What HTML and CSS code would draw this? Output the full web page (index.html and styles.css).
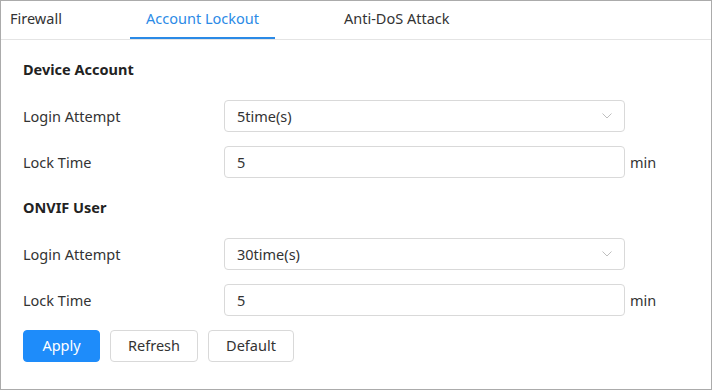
FILE: index.html
```html
<!DOCTYPE html>
<html>
<head>
<meta charset="utf-8">
<link rel="stylesheet" href="styles.css">
</head>
<body>
<div class="frame">
  <div class="tabs">
    <div class="tab first">Firewall</div>
    <div class="tab active">Account Lockout</div>
    <div class="tab last">Anti-DoS Attack</div>
  </div>
  <div class="content">
    <div class="section-title">Device Account</div>
    <div class="row">
      <div class="label">Login Attempt</div>
      <div class="box select"><span>5time(s)</span>
        <svg class="chev" width="10" height="6" viewBox="0 0 10 6"><path d="M0.5 0.5 L5 5 L9.5 0.5" fill="none" stroke="#bfbfbf" stroke-width="1"/></svg>
      </div>
    </div>
    <div class="row">
      <div class="label">Lock Time</div>
      <div class="box"><span>5</span></div>
      <div class="unit">min</div>
    </div>
    <div class="section-title">ONVIF User</div>
    <div class="row">
      <div class="label">Login Attempt</div>
      <div class="box select"><span>30time(s)</span>
        <svg class="chev" width="10" height="6" viewBox="0 0 10 6"><path d="M0.5 0.5 L5 5 L9.5 0.5" fill="none" stroke="#bfbfbf" stroke-width="1"/></svg>
      </div>
    </div>
    <div class="row">
      <div class="label">Lock Time</div>
      <div class="box"><span>5</span></div>
      <div class="unit">min</div>
    </div>
    <div class="buttons">
      <div class="btn primary">Apply</div>
      <div class="btn refresh">Refresh</div>
      <div class="btn default">Default</div>
    </div>
  </div>
</div>
</body>
</html>
```
FILE: styles.css
```css
* { box-sizing: border-box; }
html, body { margin: 0; padding: 0; }
body {
  font-family: "Noto Sans", "Open Sans", sans-serif;
  font-size: 14.5px;
  color: #333;
  background: #fff;
}
.frame {
  width: 712px;
  height: 390px;
  border: 1px solid #ababab;
  overflow: hidden;
}
.tabs {
  display: flex;
  height: 39px;
  border-bottom: 1px solid #e4e4e4;
  padding-left: 9px;
}
.tab {
  line-height: 35px;
  color: #333;
  flex: none;
}
.tab.first { width: 67px; }
.tab.active {
  margin-left: 53px;
  color: #2b8ae6;
  border-bottom: 2px solid #2b8ae6;
  width: 145px;
  text-align: center;
}
.tab.last { margin-left: 69px; }
.content {
  padding: 20px 0 0 22px;
}
.section-title {
  font-weight: bold;
  line-height: 19px;
  height: 20px;
  margin-bottom: 20px;
  color: #222;
}
.row {
  display: flex;
  align-items: center;
  height: 32px;
  margin-bottom: 14px;
}
.row + .section-title { margin-top: 20px; }
.label {
  width: 201px;
  flex: none;
}
.box {
  width: 401px;
  height: 32px;
  border: 1px solid #d9d9d9;
  border-radius: 4px;
  display: flex;
  align-items: center;
  justify-content: space-between;
  padding: 0 12px;
}
.unit { margin-left: 5px; }
.buttons {
  display: flex;
  gap: 10px;
}
.btn {
  height: 32px;
  line-height: 29px;
  border: 1px solid #d9d9d9;
  border-radius: 4px;
  text-align: center;
  color: #333;
}
.btn.primary {
  width: 77px;
  background: #1e8cfa;
  border-color: #1e8cfa;
  color: #fff;
}
.btn.refresh { width: 88px; }
.btn.default { width: 86px; }
```
